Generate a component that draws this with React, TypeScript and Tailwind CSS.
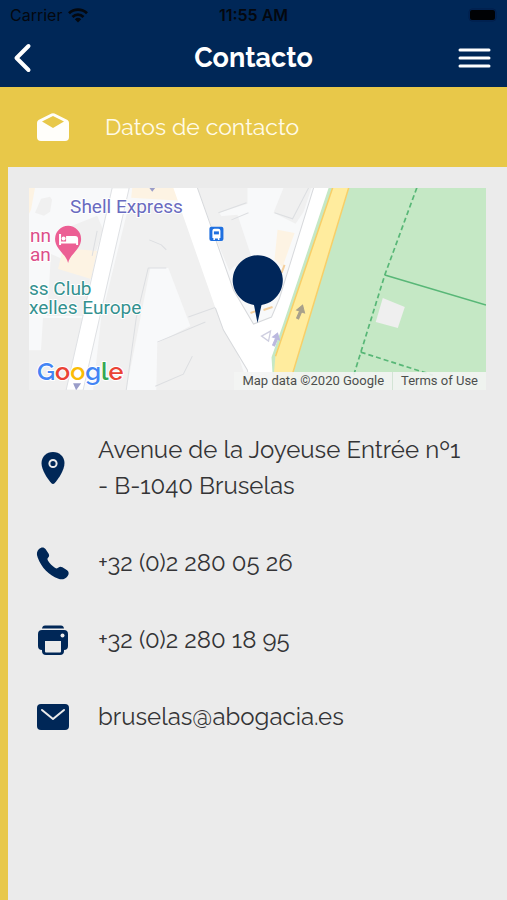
import type { ReactNode } from "react";

function StatusBar() {
  return (
    <div className="grid grid-cols-3 items-center px-[10px] pt-[6px] font-['Inter','Liberation_Sans',sans-serif] text-[16px] leading-[18px] text-[#04080f]">
      <div className="flex items-center gap-[6px]">
        <span>Carrier</span>
        <svg width="20" height="15" viewBox="0 0 20 15" aria-label="Wi-Fi" fill="none" stroke="currentColor" strokeWidth="2.8">
          <path d="M1 5.2a13 13 0 0 1 18 0" />
          <path d="M4.5 8.9a8 8 0 0 1 11 0" />
          <path d="M10 14.5l-3.2-3.3a4.7 4.7 0 0 1 6.4 0z" fill="currentColor" stroke="none" />
        </svg>
      </div>
      <span className="text-center font-semibold whitespace-nowrap">11:55 AM</span>
      <div className="flex justify-end">
        <svg width="29" height="14" viewBox="0 0 29 14" aria-label="Battery">
          <rect x="1" y="1" width="27" height="12" rx="3" fill="none" stroke="#011d4a" />
          <rect x="2" y="2" width="25" height="10" rx="2" fill="#000205" />
        </svg>
      </div>
    </div>
  );
}

function Header() {
  return (
    <header className="flex h-[87px] flex-col bg-[#002757]">
      <StatusBar />
      <div className="grid flex-1 grid-cols-[40px_1fr_40px] items-center px-3 pt-1 text-white">
        <button type="button" aria-label="Volver" className="flex">
          <svg width="20" height="30" viewBox="0 0 20 30" fill="none" stroke="currentColor" strokeWidth="4" strokeLinecap="round" strokeLinejoin="round">
            <path d="M16.500 3L4.500 15l12 12" />
          </svg>
        </button>
        <h1 className="text-center font-['Raleway','Open_Sans',sans-serif] text-[27px] leading-[32px] font-bold">Contacto</h1>
        <button type="button" aria-label="Menú" className="flex justify-end">
          <svg width="40" height="24" viewBox="0 0 40 24" fill="none" stroke="currentColor" strokeWidth="3" strokeLinecap="round">
            <path d="M5 4h29M5 12h29M5 20h29" />
          </svg>
        </button>
      </div>
    </header>
  );
}

function MapView() {
  return (
    <div className="relative h-[202px] overflow-hidden bg-[#f0f0f0] font-['Roboto',sans-serif]">
      <svg className="h-full w-full" viewBox="0 0 456 202" preserveAspectRatio="xMidYMid slice" aria-label="Mapa">
        <rect width="456" height="202" fill="#f8f9fa" />
        <g fill="#f0f0f0">
          <path d="M14 130h42L42 202H0v-40h12z" />
          <path d="M12 11l9-2 2 3-2 12-6 4-9-3z" />
          <path d="M38 40l30-12 6 14-8 24-26-2zM22 66l40 18-6 44H18z" />
          <path d="M100 16h50l52 130 18 56H127l1-47 33-17-22-58h-18L97 202H64l8-72z" />
          <path d="M168 0h50v16l-28 9 24 44-14 14-10-24z" />
          <path d="M254 0h28l-8 24-8 12-22-11z" />
          <path d="M184 29l24-2 14 42-16 10z" />
        </g>
        <g fill="#fdf3e3">
          <path d="M0 0h6L2 22l-2 4zM34 60l34 3-6 28-33-10zM103 0h44l5 13-50-3z" />
          <path d="M248 42l17 3-12 34-8-8z" />
        </g>
        <g fill="none" stroke="#dcdee1" strokeWidth="1">
          <path d="M119 80h18M120 52l12 5 5 5M119 80l-12 50-10 72M189 25l28-10M202 32l17-7M159 129l28-10M126 198l28-12 9-18M128 154l48-20" />
          <path d="M68 43l-5 25M245 25l18 6 16-31" />
        </g>
        <path d="M221 125l8-3M234 122l9-3M252 85l3-8" stroke="#f4cf9d" strokeWidth="2" />
        <path d="M83 0h17L54 202H37z" fill="#fff" stroke="#dfe1e4" />
        <path d="M144 0h24l36 102 20 34 18-7 8-19L284 0h16L254 135l-8 34 5 33h-30l-3-20-24-40-8-22z" fill="#fff" />
        <path d="M168 0l36 102 20 34 18-7 8-19L284 0M186 120l8 22 24 40 2 20" fill="none" stroke="#d7d9dc" />
        <path d="M299 0h157v202H244l-2-33 12-34z" fill="#c5e8c5" />
        <path d="M303 0h16L258 202h-15l3-36z" fill="#ffec9e" />
        <path d="M303 0L246 168M319 0L258 202" fill="none" stroke="#f8cf68" strokeWidth="1.500" />
        <path d="M353 110l22 9-7 21-22-6z" fill="#efefef" />
        <g fill="none" stroke="#58b777" strokeWidth="1.700">
          <path d="M387 0l-32 87-31 100M331 164l72 23" strokeDasharray="5 3" />
          <path d="M355 87l101 30" />
        </g>
        <path d="M267 130l3-7-3-1 6-5 2 8-3-1-3 7z" fill="#a8a08b" stroke="#a8a08b" />
        <path d="M243 157l3-7-3-1 5-4 2 7-2-1-3 7z" fill="#bbb9df" stroke="#bbb9df" />
        <path d="M232 148l9-5-2 10z" fill="#fff" stroke="#cfcfe0" strokeWidth="1.300" />
        <path d="M120 0h6l-3 4zM44 195h8l-5 7z" fill="#9a9dc9" />
        <g strokeWidth="2" stroke="#fff" strokeLinejoin="round" paintOrder="stroke" fontSize="19">
          <text x="41" y="25" fill="#696bc0">Shell Express</text>
          <text fill="#dc4f89">
            <tspan x="1" y="54">nn</tspan>
            <tspan x="1" y="73">an</tspan>
          </text>
          <text fill="#33918f">
            <tspan x="0" y="107">ss Club</tspan>
            <tspan x="0" y="126">xelles Europe</tspan>
          </text>
        </g>
        <path d="M39 75c-2-9-13-14-13-24a13 13 0 0 1 26 0c0 10-11 15-13 24z" fill="#ec5f94" />
        <path d="M31 46v11M31 54.500h17V57M48 54v-3q0-2-2-2h-8v5" fill="none" stroke="#fff" strokeWidth="2" />
        <path d="M38 49h8q2 0 2 2v3H38z" fill="#fff" />
        <circle cx="34.500" cy="50.500" r="2" fill="#fff" />
        <rect x="180" y="39" width="14" height="14" rx="2" fill="#1f70e0" />
        <path d="M183 43q0-2 2-2h4q2 0 2 2v7h-1v2h-1.500v-1.500h-3V52H184v-2h-1z" fill="#fff" />
        <path d="M184.500 43.500h5v3h-5z" fill="#1f70e0" />
        <path d="M228 135l-3.500-18a25 25 0 1 1 7.500 0z" fill="#00265a" />
        <g fontFamily="Raleway, Lato, sans-serif" fontSize="25" fontWeight="600" stroke="#fff" strokeWidth="2" paintOrder="stroke">
          <text x="8" y="192">
            <tspan fill="#4385f4">G</tspan>
            <tspan fill="#ea4335">o</tspan>
            <tspan fill="#fbbc05">o</tspan>
            <tspan fill="#4385f4">g</tspan>
            <tspan fill="#34a853">l</tspan>
            <tspan fill="#ea4335">e</tspan>
          </text>
        </g>
      </svg>
      <div className="absolute right-0 bottom-0 flex h-[18px] items-center bg-[#f3f4f3]/90 text-[13px] leading-[18px] text-[#4c4f4d]">
        <span className="px-2">Map data ©2020 Google</span>
        <a href="#terms" className="border-l border-[#d3e4d5] px-2">Terms of Use</a>
      </div>
    </div>
  );
}

function ContactRow({ icon, children }: { icon: ReactNode; children: ReactNode }) {
  return (
    <li className="flex items-center gap-[28px]">
      <span className="flex w-[34px] shrink-0 justify-center text-[#002757]">{icon}</span>
      <div className="min-w-0 flex-1">{children}</div>
    </li>
  );
}

const PinIcon = (
  <svg width="24" height="34" viewBox="0 0 24 34">
    <path d="M12 1C5.500 1 .5 5.800.5 12c0 7.300 6 15.500 9.700 20.100q1.800 2 3.600 0C17.500 27.500 23.500 19.300 23.500 12 23.500 5.800 18.500 1 12 1z" fill="currentColor" />
    <circle cx="12" cy="12.500" r="3.600" fill="none" stroke="#ebebeb" strokeWidth="2" />
  </svg>
);

const PhoneIcon = (
  <svg width="34" height="34" viewBox="0 0 34 34" fill="currentColor">
    <path d="M3 3C5 1 8 .8 9.500 3l3 4.500c1 1.700.8 3-.3 4-1 1-1 2 0 3.500 1.800 2.700 4 5 6.700 6.700 1.500 1 2.500.9 3.600-.1 1-1 2.300-1.200 3.900-.3l4.700 3c2 1.400 2 3.800.6 5.600C29.500 33 26 34 22.500 32.700 12.500 29 5.500 21.500 1.700 11.500.3 8 .8 5 3 3z" />
  </svg>
);

const PrinterIcon = (
  <svg width="32" height="32" viewBox="0 0 32 32">
    <path d="M8 1.500h16q2.500 0 3 3H5q.5-3 3-3zM5 6h22q4 0 4 4v12q0 4-4 4v1q0 4-4 4H9q-4 0-4-4v-1q-4 0-4-4V10q0-4 4-4z" fill="currentColor" />
    <path d="M8 17h16v10.500q0 1-1 1H9q-1 0-1-1z" fill="#ebebeb" />
    <circle cx="25.500" cy="11.500" r="2" fill="#ebebeb" />
  </svg>
);

const MailIcon = (
  <svg width="34" height="28" viewBox="0 0 34 28">
    <rect x="1" y="1" width="32" height="26" rx="4" fill="currentColor" />
    <path d="M6 7l11 9 11-9" fill="none" stroke="#ebebeb" strokeWidth="2" strokeLinecap="round" strokeLinejoin="round" />
  </svg>
);

export default function App() {
  return (
    <div className="flex min-h-screen flex-col bg-[#e8c849]">
      <Header />
      <main className="flex flex-1 flex-col font-['Raleway','Open_Sans',sans-serif]">
        <div className="flex h-20 items-center gap-[35px] px-9 text-white">
          <svg width="34" height="30" viewBox="0 0 34 30" className="shrink-0" aria-hidden="true">
            <path d="M15.500 1.500q1.500-.7 3 0L31.500 8q1.500.8 1.500 3v14q0 4-4 4H5q-4 0-4-4V11q0-2.200 1.500-3z" fill="#fffefa" />
            <path d="M6 9.500l11-5.500 11 5.500L17 16z" fill="#e8c849" />
          </svg>
          <h2 className="text-[23px] leading-[32px] text-[#fffbe8]">Datos de contacto</h2>
        </div>
        <section className="ml-2 flex-1 bg-[#ebebeb] px-[21px] pt-[21px]">
          <MapView />
          <ul className="flex flex-col gap-[41px] px-[10px] pt-[42px] pl-[7px] text-[24px] leading-[36px] text-[#343436]">
            <ContactRow icon={PinIcon}>
              <address className="not-italic">Avenue de la Joyeuse Entrée nº1 - B-1040 Bruselas</address>
            </ContactRow>
            <ContactRow icon={PhoneIcon}>
              <a href="tel:+3222800526">+32 (0)2 280 05 26</a>
            </ContactRow>
            <ContactRow icon={PrinterIcon}>
              <a href="tel:+3222801895">+32 (0)2 280 18 95</a>
            </ContactRow>
            <ContactRow icon={MailIcon}>
              <a href="mailto:bruselas@abogacia.es">bruselas@abogacia.es</a>
            </ContactRow>
          </ul>
        </section>
      </main>
    </div>
  );
}
